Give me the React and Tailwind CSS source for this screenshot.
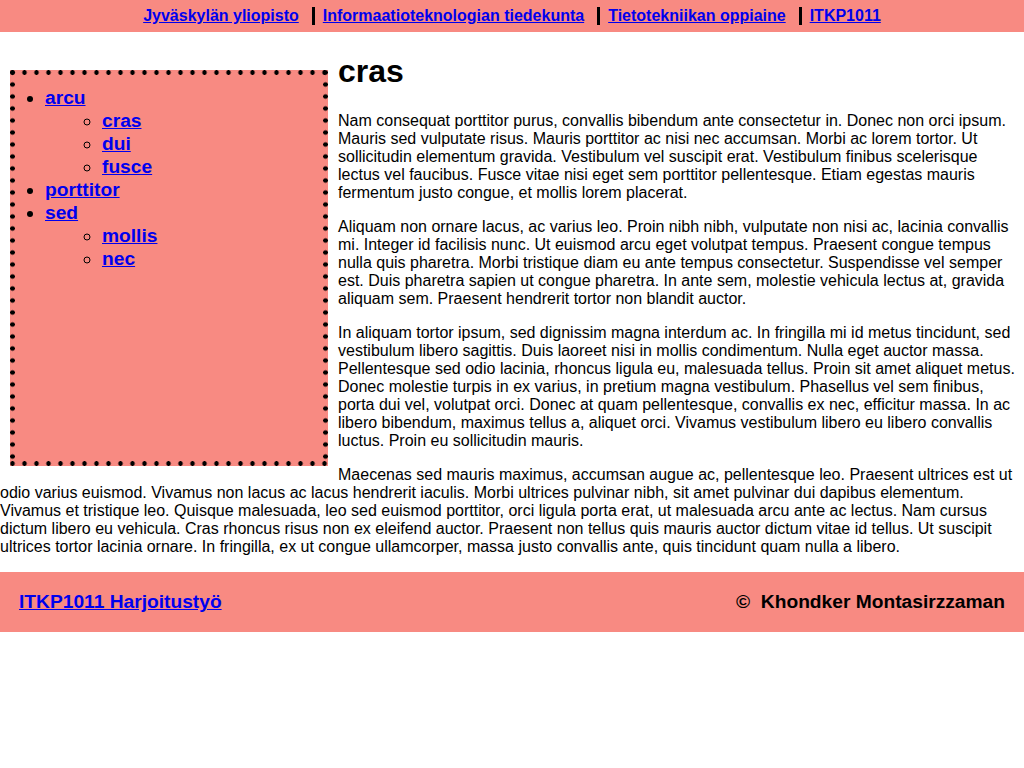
export default function App() {
  const link = "text-[#0000ee] underline font-bold";
  return (
    <div className="font-['Liberation_Sans',Arial,sans-serif] leading-[normal] text-black bg-white text-[16px]">
      <header className="h-[32px] bg-[#f88a82] flex items-center justify-center">
        <ul className="flex items-center">
          <li className="pr-[13px]"><a href="#" className={link}>Jyväskylän yliopisto</a></li>
          <li className="border-l-[3px] border-black pl-[8px] pr-[13px]"><a href="#" className={link}>Informaatioteknologian tiedekunta</a></li>
          <li className="border-l-[3px] border-black pl-[8px] pr-[13px]"><a href="#" className={link}>Tietotekniikan oppiaine</a></li>
          <li className="border-l-[3px] border-black pl-[8px]"><a href="#" className={link}>ITKP1011</a></li>
        </ul>
      </header>
      <main className="flow-root pr-[6px]">
        <aside className="float-left mt-[38px] ml-[10px] mr-[10px] mb-[10px] w-[318px] h-[396px] p-[5px] [background:radial-gradient(circle,#000_2.1px,transparent_2.6px)_-3.5px_0/12px_5px_repeat-x,radial-gradient(circle,#000_2.1px,transparent_2.6px)_-3.5px_100%/12px_5px_repeat-x,radial-gradient(circle,#000_2.1px,transparent_2.6px)_0_-3.5px/5px_12px_repeat-y,radial-gradient(circle,#000_2.1px,transparent_2.6px)_100%_-3.5px/5px_12px_repeat-y,#f88a82]">
          <ul className="list-disc pl-[30px] pt-[11px] text-[19.2px] leading-[23px]">
            <li>
              <a href="#" className={link}>arcu</a>
              <ul className="list-[circle] pl-[57px]">
                <li><a href="#" className={link}>cras</a></li>
                <li><a href="#" className={link}>dui</a></li>
                <li><a href="#" className={link}>fusce</a></li>
              </ul>
            </li>
            <li><a href="#" className={link}>porttitor</a></li>
            <li>
              <a href="#" className={link}>sed</a>
              <ul className="list-[circle] pl-[57px]">
                <li><a href="#" className={link}>mollis</a></li>
                <li><a href="#" className={link}>nec</a></li>
              </ul>
            </li>
          </ul>
        </aside>
        <h1 className="text-[32px] font-bold my-[21.44px]">cras</h1>
        <p className="my-[16px]">Nam consequat porttitor purus, convallis bibendum ante consectetur in. Donec non orci ipsum. Mauris sed vulputate risus. Mauris porttitor ac nisi nec accumsan. Morbi ac lorem tortor. Ut sollicitudin elementum gravida. Vestibulum vel suscipit erat. Vestibulum finibus scelerisque lectus vel faucibus. Fusce vitae nisi eget sem porttitor pellentesque. Etiam egestas mauris fermentum justo congue, et mollis lorem placerat.</p>
        <p className="my-[16px]">Aliquam non ornare lacus, ac varius leo. Proin nibh nibh, vulputate non nisi ac, lacinia convallis mi. Integer id facilisis nunc. Ut euismod arcu eget volutpat tempus. Praesent congue tempus nulla quis pharetra. Morbi tristique diam eu ante tempus consectetur. Suspendisse vel semper est. Duis pharetra sapien ut congue pharetra. In ante sem, molestie vehicula lectus at, gravida aliquam sem. Praesent hendrerit tortor non blandit auctor.</p>
        <p className="my-[16px]">In aliquam tortor ipsum, sed dignissim magna interdum ac. In fringilla mi id metus tincidunt, sed vestibulum libero sagittis. Duis laoreet nisi in mollis condimentum. Nulla eget auctor massa. Pellentesque sed odio lacinia, rhoncus ligula eu, malesuada tellus. Proin sit amet aliquet metus. Donec molestie turpis in ex varius, in pretium magna vestibulum. Phasellus vel sem finibus, porta dui vel, volutpat orci. Donec at quam pellentesque, convallis ex nec, efficitur massa. In ac libero bibendum, maximus tellus a, aliquet orci. Vivamus vestibulum libero eu libero convallis luctus. Proin eu sollicitudin mauris.</p>
        <p className="my-[16px]">Maecenas sed mauris maximus, accumsan augue ac, pellentesque leo. Praesent ultrices est ut odio varius euismod. Vivamus non lacus ac lacus hendrerit iaculis. Morbi ultrices pulvinar nibh, sit amet pulvinar dui dapibus elementum. Vivamus et tristique leo. Quisque malesuada, leo sed euismod porttitor, orci ligula porta erat, ut malesuada arcu ante ac lectus. Nam cursus dictum libero eu vehicula. Cras rhoncus risus non ex eleifend auctor. Praesent non tellus quis mauris auctor dictum vitae id tellus. Ut suscipit ultrices tortor lacinia ornare. In fringilla, ex ut congue ullamcorper, massa justo convallis ante, quis tincidunt quam nulla a libero.</p>
      </main>
      <footer className="h-[60px] bg-[#f88a82] flex items-center justify-between px-[19px] text-[19.2px] font-bold">
        <a href="#" className="text-[#0000ee] underline">ITKP1011 Harjoitustyö</a>
        <span>©&nbsp; Khondker Montasirzzaman</span>
      </footer>
    </div>
  );
}
